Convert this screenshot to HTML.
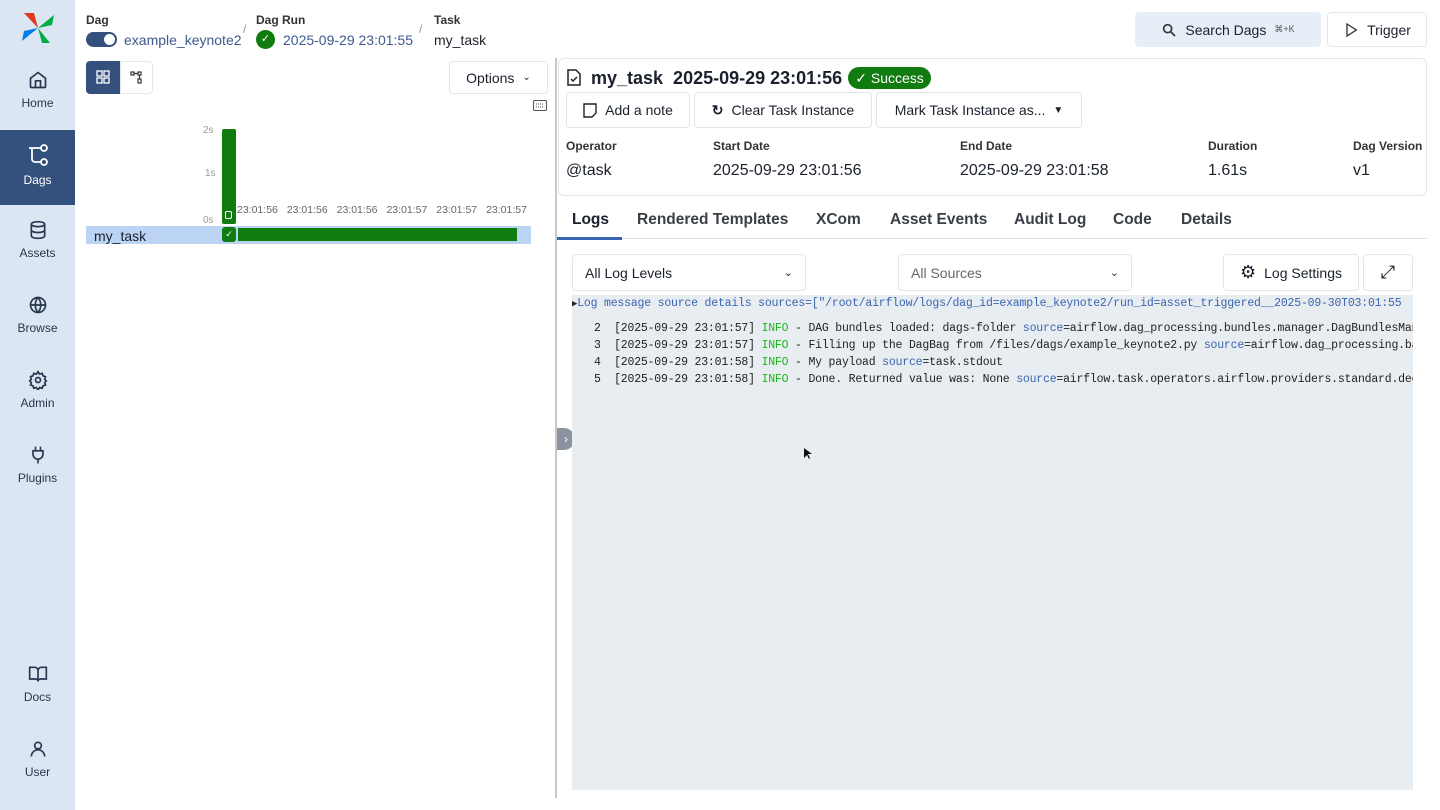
<!DOCTYPE html>
<html><head><meta charset="utf-8"><style>
*{box-sizing:border-box;margin:0;padding:0}
body{width:1440px;height:810px;overflow:hidden;background:#fff;font-family:"Liberation Sans",sans-serif;color:#1a202c;position:relative}
.abs{position:absolute}
.side{left:0;top:0;width:75px;height:810px;background:#dce6f3}
.nav{position:absolute;left:0;width:75px;text-align:center;font-size:12px;color:#27364f}
.nav svg{display:block;margin:0 auto 6px}
.btn{position:absolute;border:1px solid #e2e6ea;border-radius:4px;background:#fff;font-size:14px;display:flex;align-items:center;justify-content:center;gap:8px;color:#1a202c}
.lbl{font-size:12px;font-weight:bold;color:#333}
.mono{font-family:"Liberation Mono",monospace;font-size:11.5px;white-space:pre;color:#222}
.tab{position:absolute;top:211px;font-size:15.5px;font-weight:bold;color:#3a3f47}
.blue{color:#3b64b0}.grn{color:#1db81d}
.ax{font-size:10px;color:#999}
</style></head><body>
<div class="abs side"></div>
<svg class="abs" style="left:20px;top:11px" width="36" height="34" viewBox="0 0 36 34">
<path d="M18 17 L4 2 L14 2 Z" fill="#e43921"/><path d="M18 17 L34 4 L32 14 Z" fill="#00ad46"/>
<path d="M18 17 L30 32 L22 32 Z" fill="#00ad46"/><path d="M18 17 L2 30 L4 20 Z" fill="#017cee"/>
<path d="M18 17 L10 6 L4 2 Z" fill="#e43921" opacity=".6"/></svg>
<div class="nav" style="top:70px"><svg width="20" height="20" viewBox="0 0 24 24" fill="none" stroke="#27364f" stroke-width="2"><path d="M3 10l9-7 9 7v10a1 1 0 0 1-1 1H4a1 1 0 0 1-1-1z"/><path d="M9 21v-8h6v8"/></svg>Home</div>
<div class="abs" style="left:0;top:130px;width:75px;height:75px;background:#34507c"></div>
<div class="nav" style="top:143px;color:#fff"><svg width="24" height="24" viewBox="0 0 24 24" fill="none" stroke="#fff" stroke-width="1.8"><circle cx="18" cy="5" r="3"/><circle cx="18" cy="19" r="3"/><path d="M3 5h12M6 5v11a3 3 0 0 0 3 3h6"/></svg>Dags</div>
<div class="nav" style="top:220px"><svg width="20" height="20" viewBox="0 0 24 24" fill="none" stroke="#27364f" stroke-width="2"><ellipse cx="12" cy="5" rx="8" ry="3"/><path d="M4 5v14c0 1.7 3.6 3 8 3s8-1.3 8-3V5M4 12c0 1.7 3.6 3 8 3s8-1.3 8-3"/></svg>Assets</div>
<div class="nav" style="top:295px"><svg width="20" height="20" viewBox="0 0 24 24" fill="none" stroke="#27364f" stroke-width="2"><circle cx="12" cy="12" r="9"/><path d="M3 12h18M12 3a14 14 0 0 1 0 18M12 3a14 14 0 0 0 0 18"/></svg>Browse</div>
<div class="nav" style="top:370px"><svg width="20" height="20" viewBox="0 0 24 24" fill="none" stroke="#27364f" stroke-width="2"><circle cx="12" cy="12" r="3"/><path d="M12 2l2 3 3-1 1 3 3 1-1 3 2 2-2 2 1 3-3 1-1 3-3-1-2 3-2-3-3 1-1-3-3-1 1-3-2-2 2-2-1-3 3-1 1-3 3 1z"/></svg>Admin</div>
<div class="nav" style="top:445px"><svg width="20" height="20" viewBox="0 0 24 24" fill="none" stroke="#27364f" stroke-width="2"><path d="M9 2v5M15 2v5M6 7h12v4a6 6 0 0 1-12 0zM12 17v5"/></svg>Plugins</div>
<div class="nav" style="top:664px"><svg width="20" height="20" viewBox="0 0 24 24" fill="none" stroke="#27364f" stroke-width="2"><path d="M2 4h6a4 4 0 0 1 4 4v13a3 3 0 0 0-3-3H2zM22 4h-6a4 4 0 0 0-4 4v13a3 3 0 0 1 3-3h7z"/></svg>Docs</div>
<div class="nav" style="top:739px"><svg width="20" height="20" viewBox="0 0 24 24" fill="none" stroke="#27364f" stroke-width="2"><circle cx="12" cy="8" r="4"/><path d="M4 21a8 8 0 0 1 16 0"/></svg>User</div>

<div class="abs lbl" style="left:86px;top:13px">Dag</div>
<div class="abs" style="left:86px;top:32px;width:31px;height:15px;border-radius:8px;background:#34507c"><div style="position:absolute;right:2px;top:2px;width:11px;height:11px;border-radius:50%;background:#fff"></div></div>
<div class="abs" style="left:124px;top:32px;font-size:14px;color:#3d5a8f">example_keynote2</div>
<div class="abs" style="left:243px;top:22px;color:#999;font-size:12px">/</div>
<div class="abs lbl" style="left:256px;top:13px">Dag Run</div>
<div class="abs" style="left:256px;top:30px;width:19px;height:19px;border-radius:50%;background:#107c10;color:#fff;font-size:11px;text-align:center;line-height:19px">✓</div>
<div class="abs" style="left:283px;top:32px;font-size:14px;color:#3d5a8f">2025-09-29 23:01:55</div>
<div class="abs" style="left:419px;top:22px;color:#999;font-size:12px">/</div>
<div class="abs lbl" style="left:434px;top:13px">Task</div>
<div class="abs" style="left:434px;top:32px;font-size:14px">my_task</div>

<div class="btn" style="left:1135px;top:12px;width:186px;height:35px;background:#e6eef7;border-color:#e6eef7"><svg width="16" height="16" viewBox="0 0 24 24" fill="none" stroke="#333" stroke-width="2.5"><circle cx="10" cy="10" r="6"/><path d="M15 15l6 6"/></svg>Search Dags <span style="font-size:9px;color:#555">⌘+K</span></div>
<div class="btn" style="left:1327px;top:12px;width:100px;height:35px"><svg width="16" height="16" viewBox="0 0 24 24" fill="none" stroke="#333" stroke-width="2"><path d="M6 3l14 9-14 9z"/></svg>Trigger</div>

<div class="abs" style="left:86px;top:61px;width:34px;height:33px;background:#34507c;border-radius:4px 0 0 4px"></div>
<svg class="abs" style="left:96px;top:70px" width="14" height="14" viewBox="0 0 14 14" fill="none" stroke="#fff" stroke-width="1.3"><rect x="1" y="1" width="5" height="5"/><rect x="8" y="1" width="5" height="5"/><rect x="1" y="8" width="5" height="5"/><rect x="8" y="8" width="5" height="5"/></svg>
<div class="abs" style="left:120px;top:61px;width:33px;height:33px;border:1px solid #e5e8ec;border-radius:0 4px 4px 0"></div>
<svg class="abs" style="left:130px;top:71px" width="13" height="13" viewBox="0 0 13 13" fill="none" stroke="#333" stroke-width="1.2"><rect x="1" y="1" width="3" height="3"/><rect x="8" y="1" width="3" height="3"/><rect x="8" y="8" width="3" height="4"/><path d="M4 2.5h4M9.5 4v4"/></svg>
<div class="btn" style="left:449px;top:61px;width:99px;height:33px">Options <span style="font-size:10px">⌄</span></div>
<svg class="abs" style="left:533px;top:100px" width="14" height="11" viewBox="0 0 14 11" fill="none" stroke="#555"><rect x=".5" y=".5" width="13" height="10" rx="1"/><path d="M3 4h8M3 7h8" stroke-dasharray="1 1"/></svg>
<div class="abs ax" style="left:203px;top:125px">2s</div>
<div class="abs ax" style="left:205px;top:168px">1s</div>
<div class="abs ax" style="left:203px;top:215px">0s</div>
<div class="abs" style="left:222px;top:129px;width:14px;height:95px;background:#0f7c0f;border-radius:2px"></div>
<div class="abs" style="left:225px;top:211px;width:7px;height:8px;border:1px solid #fff;border-radius:2px"></div>
<div class="abs" style="left:237px;top:204px;color:#666;font-size:10.5px;width:290px;display:flex;justify-content:space-between"><span>23:01:56</span><span>23:01:56</span><span>23:01:56</span><span>23:01:57</span><span>23:01:57</span><span>23:01:57</span></div>
<div class="abs" style="left:86px;top:226px;width:445px;height:18px;background:#bcd4f4"></div>
<div class="abs" style="left:94px;top:228px;font-size:14px">my_task</div>
<div class="abs" style="left:222px;top:227px;width:14px;height:15px;background:#0f7c0f;border-radius:3px;color:#fff;font-size:9px;text-align:center;line-height:15px">✓</div>
<div class="abs" style="left:238px;top:228px;width:279px;height:13px;background:#0f7c0f"></div>

<div class="abs" style="left:555px;top:58px;width:2px;height:740px;background:#c8c8c8"></div>
<div class="abs" style="left:557px;top:428px;width:18px;height:22px;background:#8a949e;border-radius:0 11px 11px 0;color:#fff;font-size:12px;line-height:22px;text-align:center">›</div>

<div class="abs" style="left:558px;top:58px;width:869px;height:138px;border:1px solid #e2e6ea;border-radius:6px"></div>
<svg class="abs" style="left:567px;top:69px" width="14" height="17" viewBox="0 0 14 17" fill="none" stroke="#222" stroke-width="1.5"><path d="M1 1h8l4 4v11H1z"/><path d="M4 10l2 2 4-4"/></svg>
<div class="abs" style="left:591px;top:68px;font-size:18px;font-weight:bold">my_task&nbsp; 2025-09-29 23:01:56</div>
<div class="abs" style="left:848px;top:67px;width:83px;height:22px;border-radius:11px;background:#107c10;color:#fff;font-size:14px;text-align:center;line-height:22px">✓ Success</div>
<div class="btn" style="left:566px;top:92px;width:124px;height:36px"><svg width="14" height="15" viewBox="0 0 14 15" fill="none" stroke="#222" stroke-width="1.4"><path d="M1 1h12v9l-4 4H1z"/></svg>Add a note</div>
<div class="btn" style="left:694px;top:92px;width:178px;height:36px"><span style="font-weight:bold">↻</span>Clear Task Instance</div>
<div class="btn" style="left:876px;top:92px;width:206px;height:36px">Mark Task Instance as... <span style="font-size:10px">▼</span></div>
<div class="abs lbl" style="left:566px;top:139px">Operator</div>
<div class="abs lbl" style="left:713px;top:139px">Start Date</div>
<div class="abs lbl" style="left:960px;top:139px">End Date</div>
<div class="abs lbl" style="left:1208px;top:139px">Duration</div>
<div class="abs lbl" style="left:1353px;top:139px">Dag Version</div>
<div class="abs" style="left:566px;top:162px;font-size:16px">@task</div>
<div class="abs" style="left:713px;top:162px;font-size:16px">2025-09-29 23:01:56</div>
<div class="abs" style="left:960px;top:162px;font-size:16px">2025-09-29 23:01:58</div>
<div class="abs" style="left:1208px;top:162px;font-size:16px">1.61s</div>
<div class="abs" style="left:1353px;top:162px;font-size:16px">v1</div>

<div class="abs" style="left:557px;top:238px;width:870px;height:1px;background:#dde1e6"></div>
<div class="abs" style="left:557px;top:237px;width:65px;height:3px;background:#3b64b0"></div>
<div class="tab" style="left:572px;color:#1a202c">Logs</div>
<div class="tab" style="left:637px">Rendered Templates</div>
<div class="tab" style="left:816px">XCom</div>
<div class="tab" style="left:890px">Asset Events</div>
<div class="tab" style="left:1014px">Audit Log</div>
<div class="tab" style="left:1113px">Code</div>
<div class="tab" style="left:1181px">Details</div>

<div class="btn" style="left:572px;top:254px;width:234px;height:37px;justify-content:space-between;padding:0 12px">All Log Levels <span style="font-size:11px">⌄</span></div>
<div class="btn" style="left:898px;top:254px;width:234px;height:37px;justify-content:space-between;padding:0 12px;color:#666">All Sources <span style="font-size:11px;color:#333">⌄</span></div>
<div class="btn" style="left:1223px;top:254px;width:136px;height:37px"><span style="font-size:18px">⚙</span>Log Settings</div>
<div class="btn" style="left:1363px;top:254px;width:50px;height:37px;font-size:18px">⤢</div>

<div class="abs" style="left:572px;top:295px;width:841px;height:495px;background:#e8edf1"></div>
<div class="abs mono" style="left:572px;top:297px;color:#3b64b0;overflow:hidden;width:841px;letter-spacing:-0.2px"><span style="color:#222;font-size:9px">▶</span>Log message source details sources=["/root/airflow/logs/dag_id=example_keynote2/run_id=asset_triggered__2025-09-30T03:01:55</div>
<div class="abs mono" style="left:594px;top:320px;line-height:17px;width:819px;overflow:hidden;letter-spacing:-0.2px">2  [2025-09-29 23:01:57] <span class="grn">INFO</span> - DAG bundles loaded: dags-folder <span class="blue">source</span>=airflow.dag_processing.bundles.manager.DagBundlesManager
3  [2025-09-29 23:01:57] <span class="grn">INFO</span> - Filling up the DagBag from /files/dags/example_keynote2.py <span class="blue">source</span>=airflow.dag_processing.bagbag
4  [2025-09-29 23:01:58] <span class="grn">INFO</span> - My payload <span class="blue">source</span>=task.stdout
5  [2025-09-29 23:01:58] <span class="grn">INFO</span> - Done. Returned value was: None <span class="blue">source</span>=airflow.task.operators.airflow.providers.standard.decorators</div>
<svg class="abs" style="left:804px;top:448px" width="8" height="12" viewBox="0 0 8 12"><path d="M0 0v10l3-3 2 4 1-1-2-4h4z" fill="#111"/></svg>
</body></html>
